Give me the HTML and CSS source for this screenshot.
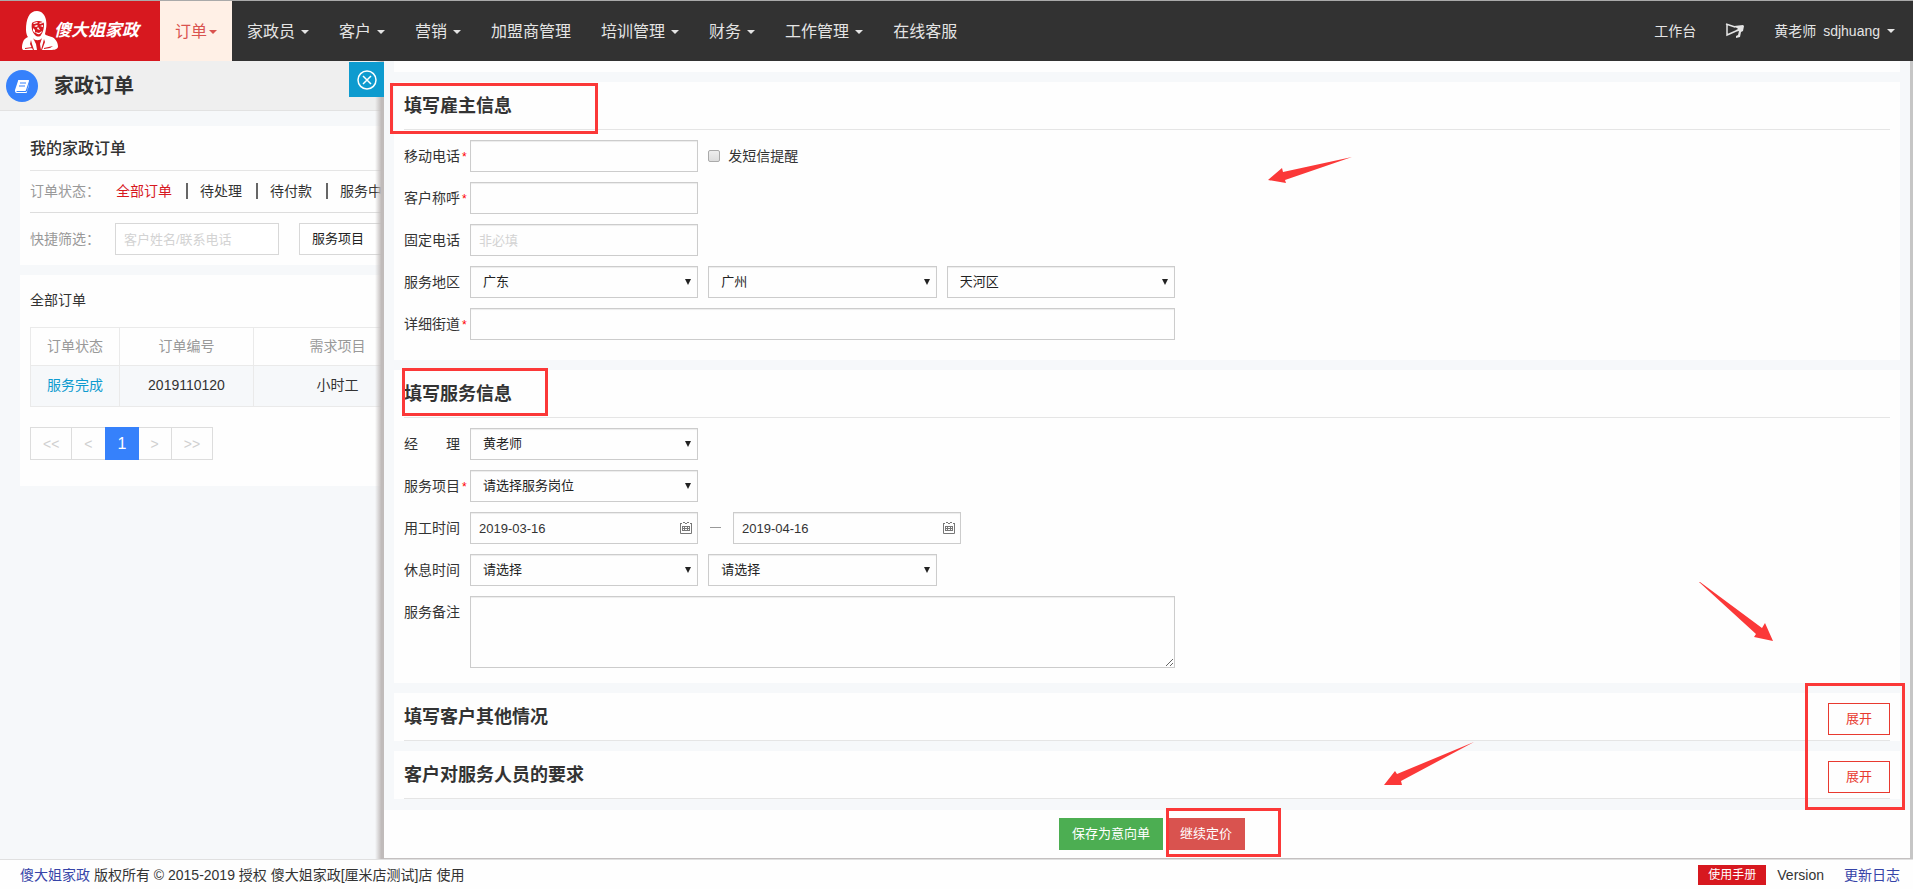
FILE: index.html
```html
<!DOCTYPE html>
<html lang="zh-CN">
<head>
<meta charset="utf-8">
<title>家政订单</title>
<link rel="stylesheet" href="styles.css">
</head>
<body>
<header class="topbar">
  <a class="logo" href="#">
    <svg class="logo-face" viewBox="0 0 36 40" aria-hidden="true">
      <path fill="#fff" d="M4 19C4 8 7 0 15 0c5 0 8 4 9 9 1 5 0 9-1 14 0 1 4 2 7 3 4 2 6 6 6 10-1 3-5 3-9 3H2c-3 0-2-5-1-8 1-3 3-4 5-5-1-1-2-4-2-7z"/>
      <path fill="#d7181f" d="M10 12c1-1 3-2 6-2s6 1 6 3c0 5-1 8-3 11-1 2-4 2-6 0-3-3-4-8-3-12z"/>
      <path fill="#fff" d="M11 12l4-1 1 1-4 1zM17 12l4-1v1l-3 1zM12 15l3-1 1 1-2 1zM18 15l3-1v2zM16 16l2 3-3-1zM13 21l4 1 3-2c-1 4-5 4-7 1zM11 17l2 2v3l-2-2z"/>
      <path fill="#d7181f" d="M11 27c2 3 7 3 9 0l-2 6 1 6h-4l-1-6zM9 29l1 4 2 6h-1l-3-6zM22 28l1 3-3 8h-1l2-7zM3 37l8-1-1 1-7 1zM22 37l9-2-3 2-6 1z"/>
    </svg>
    <span class="logo-text">傻大姐家政</span>
  </a>
  <nav class="nav">
    <a class="nav-item active" href="#">订单<i class="caret"></i></a>
    <a class="nav-item" href="#">家政员<i class="caret"></i></a>
    <a class="nav-item" href="#">客户<i class="caret"></i></a>
    <a class="nav-item" href="#">营销<i class="caret"></i></a>
    <a class="nav-item" href="#">加盟商管理</a>
    <a class="nav-item" href="#">培训管理<i class="caret"></i></a>
    <a class="nav-item" href="#">财务<i class="caret"></i></a>
    <a class="nav-item" href="#">工作管理<i class="caret"></i></a>
    <a class="nav-item" href="#">在线客服</a>
  </nav>
  <div class="user-nav">
    <a href="#">工作台</a>
    <a href="#" aria-label="公告">
      <svg class="horn" viewBox="0 0 20 18" aria-hidden="true">
        <path fill="none" stroke="#e4e4e4" stroke-width="1.500" d="M2 2v11l9-4M1 2l9 3"/>
        <path fill="#e4e4e4" d="M9 4l9-1 1 1-1 5-2 1-1 5-4 1v-2l2-1 1-4-4 1 1-2 2-1-1-1-3-1z"/>
      </svg>
    </a>
    <a class="user" href="#"><span>黄老师</span><span>sdjhuang</span><i class="caret"></i></a>
  </div>
</header>

<div class="main">
  <section class="page">
    <div class="page-title">
      <span class="page-icon">
        <svg viewBox="0 0 14 14" aria-hidden="true">
          <path fill="#fff" d="M4 1h9c1 0 1 0 1 1l-3 9c0 1-1 1-2 1H2c-1 0-1 1 0 1h8c1 0 1 0 2-1l2-7c0 3-2 7-2 8s-1 1-2 1H2c-2 0-2-2-2-3L3 2c0-1 0-1 1-1z"/>
          <path stroke="#3681fb" d="M5 4h6M4 7h6"/>
        </svg>
      </span>
      <h1>家政订单</h1>
      <button class="close" type="button" aria-label="关闭">
        <svg viewBox="0 0 20 20" aria-hidden="true"><circle cx="10" cy="10" r="9"/><path d="M6 6l8 8M14 6l-8 8"/></svg>
      </button>
    </div>

    <div class="panel">
      <h2>我的家政订单</h2>
      <div class="status-row">
        <span class="muted">订单状态：</span>
        <div class="status-links">
          <a class="current" href="#">全部订单</a>
          <a href="#">待处理</a>
          <a href="#">待付款</a>
          <a href="#">服务中</a>
        </div>
      </div>
      <div class="filter-row">
        <label class="muted" for="quick">快捷筛选：</label>
        <input class="quick" id="quick" type="text" placeholder="客户姓名/联系电话">
        <select class="service" aria-label="服务项目"><option>服务项目</option></select>
      </div>
    </div>

    <div class="panel orders">
      <h3>全部订单</h3>
      <table class="order-table">
        <colgroup><col class="c-status"><col class="c-no"><col class="c-item"></colgroup>
        <thead><tr><th>订单状态</th><th>订单编号</th><th>需求项目</th></tr></thead>
        <tbody><tr><td><a href="#">服务完成</a></td><td>2019110120</td><td>小时工</td></tr></tbody>
      </table>
      <div class="pager">
        <button type="button">&lt;&lt;</button>
        <button type="button">&lt;</button>
        <button class="on" type="button">1</button>
        <button type="button">&gt;</button>
        <button type="button">&gt;&gt;</button>
      </div>
    </div>
  </section>

  <section class="drawer">
    <div class="drawer-body">
      <div class="card tail"></div>

      <div class="card employer">
        <div class="card-head"><h2>填写雇主信息</h2><span class="mark mark-employer"></span></div>
        <div class="row">
          <label for="mobile">移动电话</label><b class="star">*</b>
          <div class="fields thirds">
            <input id="mobile" type="text">
            <label class="check"><input type="checkbox">发短信提醒</label>
          </div>
        </div>
        <div class="row">
          <label for="name">客户称呼</label><b class="star">*</b>
          <div class="fields thirds"><input id="name" type="text"></div>
        </div>
        <div class="row">
          <label for="tel">固定电话</label><b class="star"></b>
          <div class="fields thirds"><input id="tel" type="text" placeholder="非必填"></div>
        </div>
        <div class="row">
          <label for="province">服务地区</label><b class="star"></b>
          <div class="fields thirds">
            <span class="pick"><select id="province"><option>广东</option></select></span>
            <span class="pick"><select aria-label="城市"><option>广州</option></select></span>
            <span class="pick"><select aria-label="区县"><option>天河区</option></select></span>
          </div>
        </div>
        <div class="row">
          <label for="street">详细街道</label><b class="star">*</b>
          <div class="fields"><input id="street" type="text"></div>
        </div>
      </div>

      <div class="card service-info">
        <div class="card-head"><h2>填写服务信息</h2><span class="mark mark-service"></span></div>
        <div class="row">
          <label class="spread" for="manager"><span>经</span><span>理</span></label><b class="star"></b>
          <div class="fields thirds"><span class="pick"><select id="manager"><option>黄老师</option></select></span></div>
        </div>
        <div class="row">
          <label for="job">服务项目</label><b class="star">*</b>
          <div class="fields thirds"><span class="pick"><select id="job"><option>请选择服务岗位</option></select></span></div>
        </div>
        <div class="row">
          <label for="from">用工时间</label><b class="star"></b>
          <div class="fields dates">
            <span class="date"><input id="from" type="text" value="2019-03-16"><svg viewBox="0 0 12 12" aria-hidden="true"><path d="M.5 1.500v10h11v-10M0 1.500h2M3 .5h2M5 1.500h2M7 .5h2M10 1.500h2M2 4.500h8M2 6.500h8M2 8.500h8M2.500 4v5M4.500 4v5M7.500 4v5M9.500 4v5"/></svg></span>
            <span class="dash"></span>
            <span class="date"><input aria-label="结束日期" type="text" value="2019-04-16"><svg viewBox="0 0 12 12" aria-hidden="true"><path d="M.5 1.500v10h11v-10M0 1.500h2M3 .5h2M5 1.500h2M7 .5h2M10 1.500h2M2 4.500h8M2 6.500h8M2 8.500h8M2.500 4v5M4.500 4v5M7.500 4v5M9.500 4v5"/></svg></span>
          </div>
        </div>
        <div class="row">
          <label for="rest">休息时间</label><b class="star"></b>
          <div class="fields thirds">
            <span class="pick"><select id="rest"><option>请选择</option></select></span>
            <span class="pick"><select aria-label="休息时段"><option>请选择</option></select></span>
          </div>
        </div>
        <div class="row">
          <label for="remark">服务备注</label><b class="star"></b>
          <div class="fields"><textarea id="remark"></textarea></div>
        </div>
      </div>

      <div class="folded">
        <div class="card"><div class="card-head"><h2>填写客户其他情况</h2><button class="expand" type="button">展开</button></div></div>
        <div class="card"><div class="card-head"><h2>客户对服务人员的要求</h2><button class="expand" type="button">展开</button></div></div>
        <span class="mark mark-expand"></span>
      </div>
    </div>
    <div class="actions">
      <button class="save" type="button">保存为意向单</button>
      <span class="next-wrap"><button class="next" type="button">继续定价</button><span class="mark mark-next"></span></span>
    </div>
    <svg class="arrow arrow-1" viewBox="0 0 84 27" aria-hidden="true"><path d="M84 0L17 23l1 3L0 23l14-12 1 4z"/></svg>
    <svg class="arrow arrow-2" viewBox="0 0 74 59" aria-hidden="true"><path d="M0 0h1l62 46 3-5 8 18-19-4 2-3z"/></svg>
    <svg class="arrow arrow-3" viewBox="0 0 90 43" aria-hidden="true"><path d="M90 0L13 32l-2-3L0 43h18l-1-4z"/></svg>
  </section>
</div>

<footer class="footer">
  <p><a href="#">傻大姐家政</a> 版权所有 © 2015-2019 授权 傻大姐家政[厘米店测试]店 使用</p>
  <div class="footer-right">
    <a class="manual" href="#">使用手册</a>
    <span class="version">Version</span>
    <a href="#">更新日志</a>
  </div>
</footer>
</body>
</html>
```
FILE: styles.css
```css
* { box-sizing: border-box; }
body {
  margin: 0;
  min-height: 100vh;
  display: flex;
  flex-direction: column;
  font: 14px/20px "Liberation Sans", "Noto Sans CJK SC", sans-serif;
  color: #333;
  background: #f6f8fa;
}
h1, h2, h3, p { margin: 0; }
a { color: inherit; text-decoration: none; }
button, input, select, textarea { font: inherit; color: inherit; border-radius: 0; }
svg { display: block; }

/* top bar */
.topbar { display: flex; height: 61px; border-top: 1px solid #aaa; background: #323232; color: #e4e4e4; }
.logo { display: flex; align-items: center; width: 160px; padding-left: 22px; background: #d7181f; color: #fff; }
.logo-face { flex: none; width: 36px; height: 40px; }
.logo-text { margin-left: -4px; font-size: 17px; font-weight: 700; font-style: italic; white-space: nowrap; }
.nav { display: flex; }
.nav-item { display: flex; align-items: center; gap: 6px; padding: 1px 15px 0; font-size: 16px; white-space: nowrap; }
.nav-item.active { gap: 2px; background: #fff0e6; color: #d9534f; }
.caret { border: 4px solid transparent; border-top-color: currentColor; border-bottom: 0; }
.user-nav { display: flex; align-items: center; gap: 29px; margin-left: auto; padding-right: 18px; }
.horn { width: 20px; height: 18px; }
.user { display: flex; align-items: center; gap: 7px; }

/* two columns */
.main { flex: 1; display: flex; }
.page { position: relative; flex: 0 0 384px; overflow: hidden; background: #f6f8fa; }
.page::after {
  content: "";
  position: absolute;
  top: 0;
  right: 0;
  bottom: 0;
  width: 9px;
  background: linear-gradient(to right, rgba(184, 180, 179, 0), #c0bbba 70%);
}
.page-title { display: flex; align-items: center; height: 50px; padding-left: 6px; border-bottom: 1px solid #e2e2e2; background: #efefef; }
.page-icon { display: grid; place-items: center; width: 32px; height: 32px; margin-right: 16px; border-radius: 50%; background: #3681fb; }
.page-icon svg { width: 14px; height: 14px; }
.page-title h1 { font-size: 20px; line-height: 28px; }
.close { position: relative; z-index: 1; display: grid; place-items: center; align-self: flex-start; width: 35px; height: 35px; margin: 1px 0 0 auto; padding: 0; border: 0; background: #0e9bcf; }
.close svg { width: 20px; height: 20px; fill: none; stroke: #fff; stroke-width: 1.500; }

.panel { margin: 15px 0 10px 20px; padding: 0 0 10px 10px; background: #fefefe; }
.panel h2 { padding: 11px 0 9px; border-bottom: 1px solid #e5e5e5; font-size: 16px; line-height: 24px; font-weight: 500; }
.panel h3 { font-size: 14px; font-weight: 400; line-height: 20px; }
.muted { color: #999; white-space: nowrap; }
.status-row { display: flex; height: 42px; align-items: center; padding-bottom: 2px; border-bottom: 1px solid #ddd; }
.status-row .muted, .filter-row .muted { width: 86px; flex: none; }
.status-links { display: flex; white-space: nowrap; }
.status-links a + a { display: flex; align-items: center; }
.status-links a + a::before { content: ""; width: 2px; height: 16px; margin: 0 12px 0 14px; background: #666; }
.status-links .current { color: #d7181f; }
.filter-row { display: flex; align-items: center; padding-top: 10px; }
.filter-row .muted { width: 85px; }
.quick, .service { height: 32px; border: 1px solid #d8d8d8; background: #fff; font-size: 13px; }
.quick { width: 164px; flex: none; margin-right: 20px; padding: 0 8px; }
.service { appearance: none; flex: none; width: 120px; padding: 0 12px; color: #222; }
::placeholder { color: #d3d3d3; opacity: 1; }

.orders { margin-top: 10px; padding: 15px 0 26px 10px; }
.order-table { width: 392px; margin-top: 17px; border-collapse: collapse; table-layout: fixed; text-align: center; }
.c-status { width: 89px; }
.c-no { width: 134px; }
.order-table th, .order-table td { height: 41px; padding: 0 0 2px; border: 1px solid #eaeaea; }
.order-table th { height: 38px; color: #999; font-weight: 400; }
.order-table td { background: #f6f8fa; }
.order-table td a { color: #0e9bcf; }
.pager { display: flex; margin-top: 20px; }
.pager button { height: 33px; padding: 0 12px; border: 1px solid #ddd; border-right: 0; background: #fefefe; color: #d0d0d0; }
.pager button:last-child { border-right: 1px solid #ddd; }
.pager .on { width: 34px; border-color: #3681fb; background: #3681fb; color: #fff; font-size: 16px; }
.pager .on + button { border-left: 0; }

/* drawer */
.drawer { position: relative; flex: 1; display: flex; flex-direction: column; border-bottom: 1px solid #c4c0c0; border-right: 3px solid #c6c6c6; background: #fefefe; }
.drawer-body { padding: 0 10px 11px; background: #f6f8fa; }
.card { margin-bottom: 10px; padding: 0 10px; background: #fefefe; }
.folded .card:nth-child(2) { margin-bottom: 0; }
.tail { height: 11px; }
.card-head { position: relative; display: flex; justify-content: space-between; height: 48px; padding-top: 10px; border-bottom: 1px solid #e5e5e5; }
.card-head h2 { font-size: 18px; line-height: 28px; }
.employer { padding-bottom: 20px; }
.service-info { padding-bottom: 15px; }
.row { display: flex; margin-top: 10px; }
.row > label { width: 56px; line-height: 32px; white-space: nowrap; }
.spread { display: flex; justify-content: space-between; }
.star { width: 10px; padding: 2px 0 0 2px; line-height: 30px; font-size: 12px; font-weight: 400; color: #f00; }
.fields { flex: 0 1 705px; }
.thirds { display: grid; grid-template-columns: repeat(3, 1fr); gap: 10px; }
.dates { display: flex; }
.date { position: relative; flex: 0 0 228px; }
.date svg { position: absolute; right: 6px; top: 10px; width: 12px; height: 12px; fill: none; stroke: #777; }
.dash { width: 11px; height: 1px; margin: 15px 12px 0; background: #999; }
.fields input[type="text"], .fields select, .fields textarea {
  display: block;
  width: 100%;
  height: 32px;
  padding: 0 8px;
  border: 1px solid #ccc;
  background: #fefefe;
  box-shadow: inset 0 1px 1px rgba(0, 0, 0, .075);
  font-size: 13px;
}
.fields select { appearance: none; padding: 0 12px; color: #222; }
.fields textarea { height: 72px; resize: vertical; }
.pick { position: relative; }
.pick::after { content: ""; position: absolute; right: 7px; top: 13px; border: 3px solid transparent; border-top: 6px solid #222; border-bottom: 0; pointer-events: none; }
.check { display: flex; align-items: center; gap: 8px; }
.check input { appearance: none; width: 12px; height: 12px; margin: 0; border: 1px solid #aaa; border-radius: 2px; background: linear-gradient(#eee, #ddd); }
.expand { width: 62px; height: 32px; padding: 0; border: 1px solid #e8392f; background: #fefefe; color: #e8392f; font-size: 13px; }
.folded { position: relative; }

.actions { display: flex; justify-content: center; gap: 4px; padding: 8px 0 8px 10px; }
.actions button { height: 32px; padding: 0 13px; border: 0; color: #fff; font-size: 13px; }
.save { background: #4cae52; }
.next { background: #d9534f; }
.next-wrap { position: relative; }

/* annotations laid over the form */
.mark { position: absolute; border: 3px solid #fb3838; pointer-events: none; }
.mark-employer { left: -14px; top: 1px; width: 208px; height: 51px; }
.mark-service { left: -2px; top: -2px; width: 146px; height: 48px; }
.mark-expand { right: -5px; top: -10px; width: 100px; height: 127px; }
.mark-next { left: -1px; top: -10px; width: 115px; height: 49px; }
.arrow { position: absolute; fill: #fb3838; pointer-events: none; }
.arrow-1 { right: 558px; top: 96px; width: 84px; height: 27px; }
.arrow-2 { right: 137px; top: 521px; width: 74px; height: 59px; }
.arrow-3 { right: 436px; top: 681px; width: 90px; height: 43px; }

/* footer */
.footer { display: flex; justify-content: space-between; align-items: center; height: 30px; padding: 0 13px 0 20px; border-top: 1px solid #e0e0e0; background: #fefefe; }
.footer a { color: #3644a8; }
.footer-right { display: flex; align-items: center; }
.footer .manual { padding: 0 10px; background: #d7181f; color: #fff; font-size: 12px; }
.version { margin: 0 20px 0 11px; }
```
